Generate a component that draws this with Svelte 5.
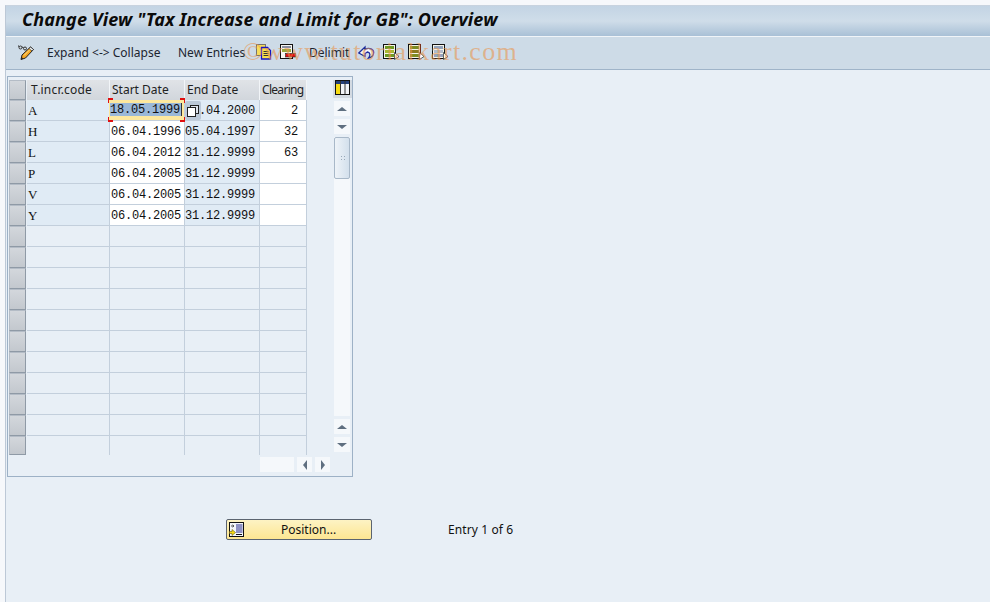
<script>
    const rows = [
        { code: "A", start: "18.05.1999", end: "31.04.2000", clearing: "2" },
        { code: "H", start: "06.04.1996", end: "05.04.1997", clearing: "32" },
        { code: "L", start: "06.04.2012", end: "31.12.9999", clearing: "63" },
        { code: "P", start: "06.04.2005", end: "31.12.9999", clearing: "" },
        { code: "V", start: "06.04.2005", end: "31.12.9999", clearing: "" },
        { code: "Y", start: "06.04.2005", end: "31.12.9999", clearing: "" }
    ];
    // the table always shows 17 lines
    const empty = Array.from({ length: 11 }, (_, i) => i);
</script>

{#snippet sheet(a, b, c)}
    <svg class="icon" viewBox="0 0 17 16" width="17" height="16">
        <rect x=".5" y=".5" width="12" height="14" fill="#f4f4ea" stroke="#111" />
        <rect x="2" y="2" width="9" height="3" fill={a} />
        <rect x="2" y="6" width="9" height="3" fill={b} />
        <rect x="2" y="10" width="9" height="3" fill={c} />
        <path d="M11.5 8.5 L11.5 15.5 L16 12.5 Z" fill="#fff" stroke="#222" stroke-width=".7" />
    </svg>
{/snippet}

<div class="page">
    <div class="main">
        <h1 class="title">Change View "Tax Increase and Limit for GB": Overview</h1>

        <div class="toolbar">
            <svg class="icon pencil" viewBox="0 0 17 17" width="17" height="17">
                <circle cx="2.5" cy="3.5" r="1.5" fill="none" stroke="#333" />
                <circle cx="7" cy="4.5" r="1.5" fill="none" stroke="#333" />
                <path d="M3.8 3 L5.6 3.6 M1 3 L0.5 1.5" stroke="#333" />
                <path d="M3 15.5 L4 11 L12.5 3 L15.5 5.5 L7.5 14 Z" fill="#f5a623" stroke="#222" />
                <path d="M12.5 3 L15.5 5.5 L14 7 L11 4.5 Z" fill="#e8eef6" stroke="#222" stroke-width=".7" />
                <path d="M3 15.5 L3.6 13 L5.4 14.6 Z" fill="#222" />
                <path d="M6 11.5 L12 5.5" stroke="#fde48a" />
            </svg>
            <span class="tool expand">Expand &lt;-&gt; Collapse</span>
            <span class="tool entries">New Entries</span>
            <svg class="icon copy" viewBox="0 0 16 16" width="16" height="16">
                <rect x=".5" y=".5" width="9" height="11" fill="#f7dc5a" stroke="#77746a" />
                <path d="M5.5 3.5 H11.5 L14.5 6.5 V15 H5.5 Z" fill="#f9e04c" stroke="#1414c0" stroke-width="1.3" />
                <path d="M7.5 7.5 H12.5 M7.5 9.5 H12.5 M7.5 11.5 H12.5" stroke="#333" />
            </svg>
            <svg class="icon remove" viewBox="0 0 16 16" width="16" height="16">
                <rect x=".5" y=".5" width="12" height="14" fill="#f7f7f2" stroke="#111" />
                <rect x="2" y="2" width="9" height="2" fill="#8a8ea0" />
                <rect x="2" y="5" width="9" height="3" fill="#9aa83c" />
                <rect x="5.5" y="9.5" width="10" height="3.5" fill="#e01010" stroke="#222" stroke-width=".6" />
            </svg>
            <span class="tool delimit">Delimit</span>
            <svg class="icon undo" viewBox="0 0 17 16" width="17" height="16">
                <path d="M.8 9 L7 3 L7 5.5 C11 3 16 5 15.6 9 C15.4 12 13 13.5 10.5 14 C12.5 11.5 12.5 8.5 9.5 8 L7 9.5 L7 12.5 Z" fill="#f3f6fb" stroke="#1c2a9c" stroke-width="1.3" />
            </svg>
            <span class="s1">{@render sheet("#6f9a22", "#a9b832", "#6f9a22")}</span>
            <span class="s2">{@render sheet("#7d8c22", "#8c7a20", "#7d8c22")}</span>
            <span class="s3">{@render sheet("#93a3bb", "#b0bccc", "#93a3bb")}</span>
            <span class="watermark">©www.tutorialkart.com</span>
        </div>

        <div class="content">
            <div class="box">
                <div class="left">
                    <div class="row head">
                        <div class="sel"></div>
                        <div class="th c1">T.incr.code</div>
                        <div class="th c2">Start Date</div>
                        <div class="th c3">End Date</div>
                        <div class="th c4">Clearing</div>
                    </div>
                    {#each rows as r, i}
                        <div class="row">
                            <div class="sel"></div>
                            <div class="td c1 key code">{r.code}</div>
                            <div class="td c2 mono" class:top={i === 0}>
                                {#if i === 0}
                                    <span class="focus"><span class="frame"><span class="mark">{r.start}</span></span></span>
                                {:else}
                                    {r.start}
                                {/if}
                            </div>
                            <div class="td c3 mono key">
                                {r.end}
                                {#if i === 0}
                                    <span class="f4">
                                        <svg viewBox="0 0 12 12" width="12" height="12">
                                            <rect x="3.5" y=".5" width="8" height="8" fill="#dfe5ee" stroke="#222" />
                                            <rect x=".5" y="2.5" width="8" height="9" fill="#fff" stroke="#222" />
                                        </svg>
                                    </span>
                                {/if}
                            </div>
                            <div class="td c4 mono num">{r.clearing}</div>
                        </div>
                    {/each}
                    {#each empty as n (n)}
                        <div class="row blank" class:end={n === 10}>
                            <div class="sel"></div>
                            <div class="td c1"></div>
                            <div class="td c2"></div>
                            <div class="td c3"></div>
                            <div class="td c4"></div>
                        </div>
                    {/each}
                    <div class="hscroll">
                        <span class="track"></span>
                        <span class="sbtn"><i class="arr l"></i></span>
                        <span class="sbtn"><i class="arr r"></i></span>
                    </div>
                </div>
                <div class="vscroll">
                    <div class="setting">
                        <svg viewBox="0 0 15 15" width="15" height="15">
                            <rect x=".5" y=".5" width="14" height="14" fill="#f2f4f8" stroke="#111" />
                            <rect x="1" y="1" width="13" height="3" fill="#24407c" />
                            <rect x="1" y="4" width="4" height="10" fill="#f8dc14" />
                            <path d="M5.5 1 V14 M10 1 V14" stroke="#333" />
                        </svg>
                    </div>
                    <span class="vbtn"><i class="arr u"></i></span>
                    <span class="vbtn"><i class="arr d"></i></span>
                    <div class="vtrack">
                        <div class="thumb"><span class="grip"></span></div>
                    </div>
                    <span class="vbtn"><i class="arr u"></i></span>
                    <span class="vbtn"><i class="arr d"></i></span>
                </div>
            </div>

            <div class="pos">
                <button class="position">
                    <svg viewBox="0 0 16 16" width="16" height="16">
                        <rect x=".5" y=".5" width="14" height="14" fill="#f4f6fa" stroke="#111" />
                        <rect x="7" y="2" width="6.5" height="9" fill="#8f92c4" />
                        <path d="M2 4 H5 M3.5 2.8 L5 4 L3.5 5.2" stroke="#555" fill="none" />
                        <path d="M7 12.5 H13" stroke="#111" />
                        <path d="M.5 9.5 H3 V7.5 L6.5 10.5 L3 13.5 V11.5 H.5 Z" fill="#f8dc14" stroke="#6a5a10" stroke-width=".6" />
                    </svg>
                    <span class="label">Position...</span>
                </button>
                <span class="entry">Entry 1 of 6</span>
            </div>
        </div>
    </div>
</div>

<style>
    :global(body) {
        margin: 0;
        background: #f6f8fb;
    }

    .page {
        width: 990px;
        height: 602px;
        padding: 5px 0 0 5px;
        box-sizing: border-box;
        overflow: hidden;
        font-family: "Noto Sans", "Liberation Sans", sans-serif;
        font-size: 12px;
        color: #111;
    }

    .main {
        height: 597px;
        border-left: 1px solid #bcc8d6;
        border-top: 1px solid #c8d3df;
        background: #e8eff6;
        display: flex;
        flex-direction: column;
    }

    .title {
        margin: 0;
        height: 31px;
        line-height: 26px;
        padding-left: 16px;
        font-family: "Noto Sans", sans-serif;
        font-size: 18px;
        letter-spacing: .15px;
        font-weight: bold;
        font-style: italic;
        color: #0b0b0b;
        background: linear-gradient(#c3d4e4, #cfdde9 50%, #a9c0d6);
        border-bottom: 1px solid #f0f4f8;
        white-space: nowrap;
        box-sizing: border-box;
    }

    .toolbar {
        position: relative;
        height: 33px;
        padding-bottom: 2px;
        box-sizing: border-box;
        background: #cddbe7;
        border-bottom: 1px solid #9fb4c9;
        display: flex;
        align-items: center;
        color: #1c2530;
    }

    .icon {
        display: block;
        flex: none;
    }

    .toolbar span { flex: none; }
    .pencil { margin-left: 12px; }
    .tool { white-space: nowrap; }
    .expand { margin-left: 12px; width: 131px; }
    .entries { width: 78px; }
    .remove { margin-left: 8px; }
    .delimit { margin-left: 13px; width: 49px; }
    .s1 { margin-left: 8px; }
    .s2 { margin-left: 8px; }
    .s3 { margin-left: 7px; }

    .watermark {
        position: absolute;
        left: 237px;
        top: 0;
        font-family: "Liberation Serif", serif;
        font-size: 26px;
        letter-spacing: 1.3px;
        color: rgba(232, 150, 80, .6);
        pointer-events: none;
        white-space: nowrap;
    }

    .content {
        flex: 1;
        padding: 6px 0 0 1px;
    }

    .box {
        width: 343px;
        height: 396px;
        border: 1px solid #9db1c6;
        display: flex;
        padding: 3px 0 0 1px;
    }

    .left { width: 300px; flex: none; }

    .row {
        display: flex;
        height: 21px;
    }

    .head { height: 20px; }
    .row.end { height: 19px; }

    .sel {
        width: 17px;
        margin-right: 1px;
        flex: none;
        background: linear-gradient(#d3d7dc, #c3c8ce);
        border: 1px solid #b4bcc6;
        border-bottom-color: #8f9aa6;
        border-right-color: #8f9aa6;
        box-sizing: border-box;
    }

    .th {
        background: linear-gradient(#e0e3e7, #d1d6dc);
        border-right: 1px solid #f2f5f8;
        box-sizing: border-box;
        line-height: 19px;
        padding-left: 2px;
        color: #222;
        white-space: nowrap;
        overflow: hidden;
    }

    .c1 { width: 83px; }
    .c2 { width: 75px; }
    .c3 { width: 75px; }
    .c4 { width: 47px; }

    .head .c1 { padding-left: 4px; letter-spacing: .2px; }
    .head .c4 { padding-left: 2px; letter-spacing: -.7px; }

    .td {
        position: relative;
        box-sizing: border-box;
        border-right: 1px solid #c3cfdc;
        border-bottom: 1px solid #c3cfdc;
        line-height: 21px;
    }

    .top { z-index: 2; }
    .blank .td { background: #e8eff6; }
    .row.end .td { border-bottom: 0; }

    .mono {
        font-family: "Liberation Mono", monospace;
        font-size: 12px;
        line-height: 23px;
        letter-spacing: -.2px;
        color: #111;
        padding-left: 1px;
        background: #fff;
        white-space: nowrap;
    }

    .key {
        background: #e0ebf5;
    }

    .c3.mono { padding-left: 0; }

    .code {
        font-family: "Liberation Serif", serif;
        font-size: 13px;
        padding-left: 1px;
    }

    .num { text-align: right; padding-right: 8px; }

    .focus {
        position: absolute;
        left: -2px;
        top: -2px;
        width: 77px;
        height: 24px;
        box-sizing: border-box;
        padding: 2px 1px;
        line-height: 15px;
        background-image:
            linear-gradient(#e01010, #e01010), linear-gradient(#e01010, #e01010),
            linear-gradient(#e01010, #e01010), linear-gradient(#e01010, #e01010),
            linear-gradient(#e01010, #e01010), linear-gradient(#e01010, #e01010),
            linear-gradient(#e01010, #e01010), linear-gradient(#e01010, #e01010);
        background-repeat: no-repeat;
        background-size: 5px 2px, 2px 5px, 5px 2px, 2px 5px, 5px 2px, 2px 5px, 5px 2px, 2px 5px;
        background-position:
            left top, left top, right top, right top,
            left bottom, left bottom, right bottom, right bottom;
    }

    .frame {
        display: block;
        height: 20px;
        box-sizing: border-box;
        padding: 3px 2px 4px 1px;
        background: #fde89e;
    }

    .mark {
        display: block;
        height: 13px;
        background: #9ab8d8;
        border-right: 1px solid #333;
        color: #111;
    }

    .f4 {
        position: absolute;
        left: 0;
        top: 1px;
        width: 16px;
        height: 19px;
        background: #bcc9d8;
        display: flex;
        align-items: center;
        justify-content: center;
        border-radius: 2px;
    }

    .hscroll {
        display: flex;
        margin: 2px 0 0 251px;
        gap: 3px;
    }

    .track {
        flex: none;
        width: 34px;
        height: 15px;
        background: #f5f8fb;
    }

    .sbtn {
        flex: none;
        width: 15px;
        height: 15px;
        background: #f5f8fb;
        display: flex;
        align-items: center;
        justify-content: center;
    }

    .arr {
        display: block;
        width: 0;
        height: 0;
        border: 4px solid transparent;
    }

    .arr.u { border-bottom: 4px solid #5f6f80; border-top: 0; border-left-width: 5px; border-right-width: 5px; }
    .arr.d { border-top: 4px solid #5f6f80; border-bottom: 0; border-left-width: 5px; border-right-width: 5px; }
    .arr.l { border-right: 4px solid #5f6f80; border-left: 0; border-top-width: 5px; border-bottom-width: 5px; }
    .arr.r { border-left: 4px solid #5f6f80; border-right: 0; border-top-width: 5px; border-bottom-width: 5px; }

    .vscroll {
        margin-left: 25px;
        width: 16px;
        display: flex;
        flex-direction: column;
        gap: 3px;
    }

    .setting {
        width: 19px;
        height: 18px;
        margin-left: -1px;
        background: #d3dae2;
        display: flex;
        justify-content: center;
        flex: none;
    }

    .vbtn {
        height: 15px;
        background: #f5f8fb;
        display: flex;
        align-items: center;
        justify-content: center;
        flex: none;
    }

    .vtrack {
        height: 279px;
        flex: none;
        background: #f5f8fb;
    }

    .thumb {
        height: 42px;
        box-sizing: border-box;
        border: 1px solid #a8b8c8;
        border-radius: 2px;
        background: linear-gradient(90deg, #eef3f8, #d3e0ec);
        display: flex;
        align-items: center;
        justify-content: center;
    }

    .grip {
        width: 5px;
        height: 7px;
        background: radial-gradient(circle, #98a8b8 1px, transparent 1px) 0 0 / 3px 3px;
    }

    .pos {
        display: flex;
        align-items: center;
        margin: 42px 0 0 219px;
    }

    .position {
        width: 146px;
        height: 21px;
        padding: 0;
        border: 1px solid #5b6470;
        border-radius: 2px;
        background: linear-gradient(#fdf3c4, #fde692);
        display: flex;
        align-items: center;
        font: inherit;
        color: #111;
    }

    .position svg { margin-left: 2px; flex: none; }
    .label { margin-left: 36px; }
    .entry { margin-left: 76px; letter-spacing: .1px; }
</style>
